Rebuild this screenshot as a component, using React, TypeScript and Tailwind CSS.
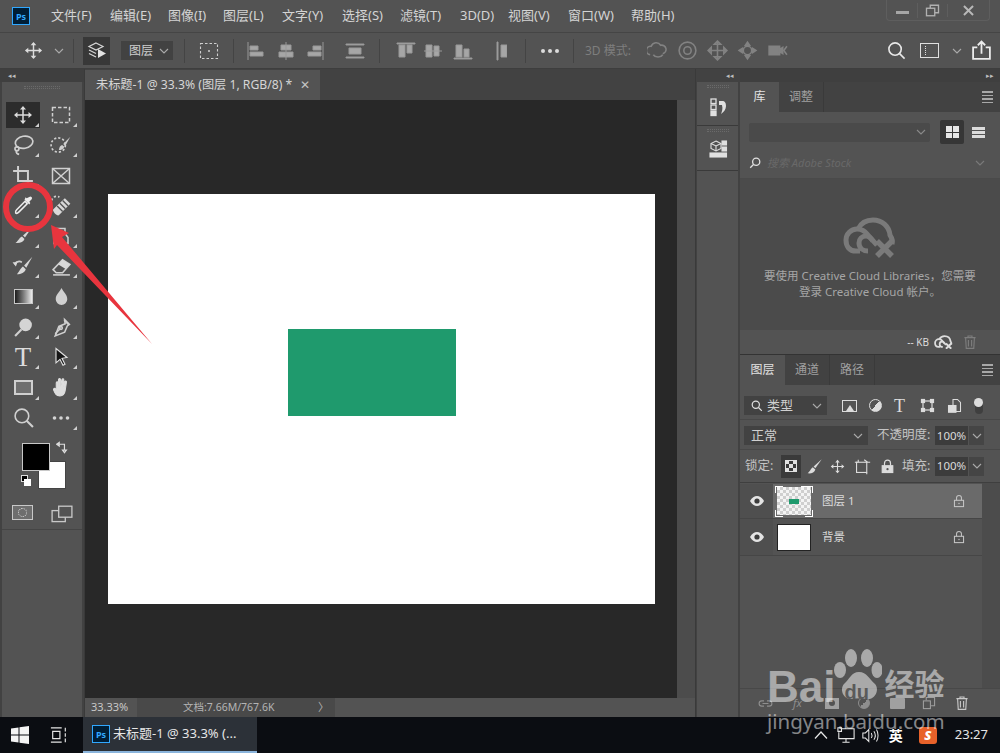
import React from 'react';

const FONT = '[font-family:"Noto_Sans","Noto_Sans_CJK_SC",sans-serif]';

const MENUS = [
    ['文件(F)', 'w-[42px] mr-[17px]'],
    ['编辑(E)', 'w-[42px] mr-[16px]'],
    ['图像(I)', 'w-[40px] mr-[15px]'],
    ['图层(L)', 'w-[43px] mr-[16px]'],
    ['文字(Y)', 'w-[43px] mr-[17px]'],
    ['选择(S)', 'w-[43px] mr-[15px]'],
    ['滤镜(T)', 'w-[43px] mr-[17px]'],
    ['3D(D)', 'w-[33px] mr-[15px]'],
    ['视图(V)', 'w-[44px] mr-[16px]'],
    ['窗口(W)', 'w-[48px] mr-[15px]'],
    ['帮助(H)', 'w-[46px]'],
];

type IconProps = { children: React.ReactNode; size?: number; color?: string; sw?: number };

const Ic = ({ children, size = 20, color = '#d0d0d0', sw = 1.5 }: IconProps) => (
    <svg width={size} height={size} viewBox="0 0 20 20" fill="none" stroke={color} strokeWidth={sw}>
        {children}
    </svg>
);

const MoveIcon = ({ size = 20, color = '#dcdcdc' }: { size?: number; color?: string }) => (
    <Ic size={size} color={color}>
        <path d="M10 2v16M2 10h16" />
        <path d="M10 1l3 3.500H7zM10 19l3-3.500H7zM1 10l3.500-3v6zM19 10l-3.500-3v6z" fill={color} stroke="none" />
    </Ic>
);

const Chevron = ({ color = '#aaaaaa' }: { color?: string }) => (
    <svg width="10" height="6" viewBox="0 0 10 6" fill="none" stroke={color} strokeWidth="1.100">
        <path d="M1 1l4 4 4-4" />
    </svg>
);

const Trash = ({ color = '#7d7d7d' }: { color?: string }) => (
    <Ic size={16} color={color} sw={1.400}>
        <path d="M3 4.500h14M7.500 4.500V2.500h5v2M4.500 4.500l.8 13.500h9.400l.8-13.500M8 7.500v8M12 7.500v8" />
    </Ic>
);

const Lock = ({ color = '#c4c4c4' }: { color?: string }) => (
    <Ic size={14} color={color}>
        <rect x="3.500" y="9" width="13" height="9" />
        <path d="M6.500 9V5.500a3.500 3.500 0 017 0V9" />
        <circle cx="10" cy="13.500" r="1" fill={color} stroke="none" />
    </Ic>
);

const Eye = () => (
    <svg width="14" height="10" viewBox="0 0 14 10">
        <path d="M0 5c2-3.300 4.300-5 7-5s5 1.700 7 5c-2 3.300-4.300 5-7 5S2 8.300 0 5z" fill="#e4e4e4" />
        <circle cx="7" cy="5" r="2.600" fill="#3c3c3c" />
    </svg>
);

const Grip = ({ w = 'w-[36px]' }: { w?: string }) => (
    <div className={`${w} h-[3px] mx-auto border-y border-dotted border-[#6a6a6a]`} />
);

const PanelMenu = () => (
    <div className="flex flex-col gap-[2px] w-[11px]">
        <div className="h-[1.500px] bg-[#a8a8a8]" />
        <div className="h-[1.500px] bg-[#a8a8a8]" />
        <div className="h-[1.500px] bg-[#a8a8a8]" />
        <div className="h-[1.500px] bg-[#a8a8a8]" />
    </div>
);

const Tab = ({ label, active, w }: { label: string; active?: boolean; w: string }) => (
    <div
        className={`${w} flex items-center justify-center text-[12px] ${
            active ? 'bg-[#535353] text-[#e2e2e2]' : 'text-[#a0a0a0] border-r border-[#3a3a3a]'
        }`}
    >
        {label}
    </div>
);

const Tool = ({ children, corner = true, active }: { children: React.ReactNode; corner?: boolean; active?: boolean }) => (
    <div className={`relative w-[34px] h-[26px] mb-[4.300px] flex items-center justify-center ${active ? 'bg-[#2c2c2c]' : ''}`}>
        {children}
        {corner && (
            <div className="absolute right-[1px] bottom-[1px] w-0 h-0 border-l-[4px] border-l-transparent border-b-[4px] border-b-[#cfcfcf]" />
        )}
    </div>
);

const TOOLS: { key: string; node: React.ReactNode; corner?: boolean; active?: boolean }[] = [
    { key: 'move', node: <MoveIcon />, active: true },
    {
        key: 'marquee',
        node: (
            <Ic>
                <rect x="1.500" y="2.500" width="17" height="15" strokeDasharray="3.500 2" />
            </Ic>
        ),
    },
    {
        key: 'lasso',
        node: (
            <Ic size={22}>
                <ellipse cx="11" cy="7.500" rx="8" ry="5.500" transform="rotate(-10 11 7.500)" />
                <circle cx="4.500" cy="13.500" r="1.800" />
                <path d="M4 15.500c-.5 1.500 .5 2.500 2.500 3" />
            </Ic>
        ),
    },
    {
        key: 'quick',
        node: (
            <Ic size={22}>
                <circle cx="7.500" cy="10" r="6.500" strokeDasharray="2 1.800" />
                <path d="M18.500 2.500l-6.500 6.500 1.800 1.800z" fill="#d0d0d0" stroke="none" />
                <path d="M11 10c-2 .5-2.500 2.500-3 4.500 2.500 0 4.500-.8 5-3z" fill="#d0d0d0" stroke="none" />
            </Ic>
        ),
    },
    {
        key: 'crop',
        node: (
            <Ic size={22}>
                <path d="M5.500 1v13.500H19M1 5.500h13.500V19" strokeWidth="1.800" />
            </Ic>
        ),
    },
    {
        key: 'frame',
        node: (
            <Ic>
                <rect x="1.500" y="2.500" width="17" height="15" />
                <path d="M1.500 2.500l17 15M18.500 2.500l-17 15" />
            </Ic>
        ),
        corner: false,
    },
    {
        key: 'eyedropper',
        node: (
            <Ic size={21} color="#ececec">
                <path d="M11.500 6L3.500 14c-1 1-1.500 2-1 3 .8.800 2 .3 3-.7l8-8z" />
                <path d="M11 4.500l4.500 4.500 1-1.500-1-1 2.300-2.500a1.600 1.600 0 00-2.300-2.200L13 3.200l-1-1z" fill="#ececec" stroke="none" />
            </Ic>
        ),
    },
    {
        key: 'heal',
        node: (
            <Ic size={22}>
                <path d="M1.500 5a4.500 4.500 0 017-3" strokeDasharray="2 1.800" />
                <path d="M3 13L13.500 3l5 5L8 18.500c-1.500 1-6.500-4-5-5.500z" fill="#d8d8d8" stroke="none" />
                <path d="M6.500 10l5 5M9 7.500l5 5M11.500 5l5 5" stroke="#535353" strokeWidth="1.200" />
            </Ic>
        ),
    },
    {
        key: 'brush',
        node: (
            <Ic>
                <path d="M18.500 2L10 9.500l2 2z" fill="#d8d8d8" stroke="none" />
                <path d="M9 10.500c-2.500 .8-2.800 3.500-6.500 6.500 4.500 .5 8-1 9-4z" fill="#d8d8d8" stroke="none" />
            </Ic>
        ),
    },
    {
        key: 'stamp',
        node: (
            <Ic>
                <path d="M6 2.500h8v5l3 4v6H3v-6l3-4z" />
            </Ic>
        ),
    },
    {
        key: 'history',
        node: (
            <Ic size={22}>
                <path d="M18.500 1.500L11 9.500l2 2z" fill="#d8d8d8" stroke="none" />
                <path d="M10 10.500c-2 1-2.500 3.500-5.500 7 4 0 7-1.500 8-4.500z" fill="#d8d8d8" stroke="none" />
                <path d="M2 8.500c2-2.500 5-3 7-2" />
                <path d="M0.500 6.500l3 4 1.500-4z" fill="#d8d8d8" stroke="none" />
            </Ic>
        ),
    },
    {
        key: 'eraser',
        node: (
            <Ic size={21}>
                <path d="M2 13l9-9.500 7 4.500-7 8H5z" />
                <path d="M11 3.500l7 4.500-4 4.500L7 8z" fill="#d8d8d8" stroke="none" />
                <path d="M2 18h16" />
            </Ic>
        ),
    },
    {
        key: 'gradient',
        node: <div className="w-[19px] h-[15px] border border-[#c8c8c8] bg-gradient-to-r from-[#1d1d1d] to-[#ededed]" />,
    },
    {
        key: 'blur',
        node: (
            <Ic size={21}>
                <path d="M10 2c2 4 5.500 6.500 5.500 10.500a5.500 5.500 0 01-11 0C4.500 8.500 8 6 10 2z" fill="#d0d0d0" stroke="none" />
            </Ic>
        ),
    },
    {
        key: 'dodge',
        node: (
            <Ic size={21}>
                <circle cx="12" cy="7.500" r="6" fill="#d4d4d4" stroke="none" />
                <path d="M8 12l-6 6" strokeWidth="2" />
            </Ic>
        ),
    },
    {
        key: 'pen',
        node: (
            <Ic size={21}>
                <path d="M13 2.500l4.500 4.500-2 1.500-2.500 6-9 3.500 3.500-9 6-2.500z" />
                <path d="M4 16l5-5M12.500 3l4.500 4.500" />
                <circle cx="9.500" cy="10.500" r="1.300" />
            </Ic>
        ),
    },
    {
        key: 'type',
        node: <span className='text-[27px] leading-none text-[#dcdcdc] [font-family:"Liberation_Serif",serif]'>T</span>,
    },
    {
        key: 'select',
        node: (
            <Ic color="#e4e4e4" sw={1.100}>
                <path d="M5 1.500l11 9-5 .8 3 6-2 1-3-6-4 3.500z" fill="#151515" />
            </Ic>
        ),
    },
    {
        key: 'shape',
        node: <div className="w-[19px] h-[15px] border-2 border-[#cfcfcf] bg-[#6f6f6f]" />,
    },
    {
        key: 'hand',
        node: (
            <Ic size={21} color="#dddddd" sw={1}>
                <path
                    d="M5 11V5.500c0-1.300 1.800-1.300 1.800 0V9l.4-6.500c0-1.300 1.900-1.300 1.900 0L9.400 9l1-6.500c.2-1.300 2-1 1.800.3L11.400 9.500l1.600-5c.4-1.200 2-.7 1.700.5L13.500 13c-.5 3-2 5-5 5-3.500 0-4.500-2-6-5.500-.6-1.500 1-2.200 1.800-1z"
                    fill="#dddddd"
                />
            </Ic>
        ),
    },
    {
        key: 'zoom',
        node: (
            <Ic size={21}>
                <circle cx="8.500" cy="8.500" r="6.500" />
                <path d="M13 13l6 6" strokeWidth="2" />
            </Ic>
        ),
        corner: false,
    },
    {
        key: 'more',
        node: (
            <Ic color="#d4d4d4">
                <circle cx="3.500" cy="10" r="1.800" fill="#d4d4d4" stroke="none" />
                <circle cx="10" cy="10" r="1.800" fill="#d4d4d4" stroke="none" />
                <circle cx="16.500" cy="10" r="1.800" fill="#d4d4d4" stroke="none" />
            </Ic>
        ),
    },
];

const AlignBars = ({ d }: { d: string }) => (
    <Ic color="#989898" sw={1}>
        <path d={d} fill="#a6a6a6" />
    </Ic>
);

const Dim3D = ({ children }: { children: React.ReactNode }) => (
    <div className="w-[24px] mr-[6px] flex items-center justify-center">
        <Ic size={21} color="#828282">
            {children}
        </Ic>
    </div>
);

const OptionsBar = () => (
    <div className="h-[37px] shrink-0 bg-[#535353] border-t border-[#454545] border-b border-b-[#3e3e3e] flex items-center">
        <div className="ml-[24px] w-[20px]">
            <MoveIcon size={19} />
        </div>
        <div className="ml-[10px] w-[10px]">
            <Chevron />
        </div>
        <div className="w-px h-[24px] bg-[#444444] ml-[9px]" />
        <div className="ml-[9px] w-[27px] h-[28px] bg-[#383838] flex items-center justify-center">
            <Ic color="#d8d8d8" sw={1.200}>
                <path d="M9 2l7 3.500-7 3.500-7-3.500zM2 9l7 3.500M2 12.500l7 3.500" />
                <path d="M11 8l8 4.500-8 4.500z" fill="#e4e4e4" stroke="none" />
            </Ic>
        </div>
        <div className="ml-[11px] w-[52px] h-[19px] bg-[#424242] flex items-center justify-between pl-[8px] pr-[4px] text-[12px] text-[#cfcfcf]">
            图层
            <Chevron />
        </div>
        <div className="w-px h-[24px] bg-[#444444] ml-[11px]" />
        <div className="ml-[14px] w-[20px]">
            <Ic color="#cfcfcf" sw={1.100}>
                <rect x="1.500" y="2.500" width="17" height="15" strokeDasharray="2.500 2" />
                <circle cx="10" cy="10" r="1" fill="#cfcfcf" stroke="none" />
            </Ic>
        </div>
        <div className="w-px h-[24px] bg-[#444444] ml-[14px] mr-[12px]" />
        <div className="w-[22px]"><AlignBars d="M2 1v18M4 5h8v4H4zM4 11h13v4H4z" /></div>
        <div className="w-[22px] ml-[8px]"><AlignBars d="M10 1v18M5 4h10v5H5zM3 11h14v5H3z" /></div>
        <div className="w-[22px] ml-[7px]"><AlignBars d="M18 1v18M8 5h8v4H8zM3 11h13v4H3z" /></div>
        <div className="w-[22px] ml-[18px]"><AlignBars d="M1 3h18v1H1zM1 16h18v1H1zM4 7h12v6H4z" /></div>
        <div className="w-px h-[24px] bg-[#444444] ml-[12px] mr-[16px]" />
        <div className="w-[22px]"><AlignBars d="M1 2h18v1H1zM3 4h6v12H3zM11 4h5v8h-5z" /></div>
        <div className="w-[22px] ml-[5px]"><AlignBars d="M1 10h18M3 4h6v12H3zM11 5h5v10h-5z" /></div>
        <div className="w-[22px] ml-[8px]"><AlignBars d="M1 17h18v1H1zM3 4h6v12H3zM11 8h5v8h-5z" /></div>
        <div className="w-[12px] ml-[20px] overflow-hidden"><AlignBars d="M2 1h1v18H2zM6 4h6v12H6z" /></div>
        <div className="w-px h-[24px] bg-[#444444] ml-[18px]" />
        <div className="w-[18px] ml-[14px]">
            <Ic color="#dcdcdc">
                <circle cx="3" cy="10" r="2" fill="#dcdcdc" stroke="none" />
                <circle cx="10" cy="10" r="2" fill="#dcdcdc" stroke="none" />
                <circle cx="17" cy="10" r="2" fill="#dcdcdc" stroke="none" />
            </Ic>
        </div>
        <div className="w-px h-[24px] bg-[#444444] ml-[15px]" />
        <div className="ml-[11px] w-[46px] text-[12px] text-[#7e7e7e] whitespace-nowrap">3D 模式:</div>
        <div className="ml-[14px] flex items-center">
            <Dim3D><path d="M3 14a4 4 0 011-8 5 5 0 019-1 4 4 0 012 8M6 14c2 3 7 3 9 0" /></Dim3D>
            <Dim3D><circle cx="10" cy="10" r="8" /><circle cx="10" cy="10" r="3.500" /></Dim3D>
            <Dim3D><path d="M10 1v18M1 10h18M10 1l3 3H7zM10 19l3-3H7zM1 10l3-3v6zM19 10l-3-3v6z" /></Dim3D>
            <Dim3D><path d="M10 2l2 3H8zM10 18l2-3H8zM2 10l3-2v4zM18 10l-3-2v4z" fill="#828282" /><circle cx="10" cy="10" r="4" /></Dim3D>
            <Dim3D><path d="M2 6h10v8H2zM12 9l3-2v6l-3-2z" fill="#828282" /><path d="M19 6l-3 4 3 4" /></Dim3D>
        </div>
        <div className="ml-auto flex items-center pr-[8px]">
            <Ic size={19} color="#e8e8e8" sw={1.700}>
                <circle cx="8.500" cy="8.500" r="6.500" />
                <path d="M13 13l5.500 5.500" />
            </Ic>
            <div className="ml-[14px] w-[19px] h-[15px] border-[1.500px] border-[#e0e0e0] flex items-center pl-[2px]">
                <div className="w-[3px] h-[9px] border-r border-dotted border-[#e0e0e0]" />
            </div>
            <div className="ml-[13px] w-[10px]"><Chevron /></div>
            <div className="ml-[9px]">
                <Ic size={21} color="#ececec" sw={1.700}>
                    <path d="M6 7H2v11h16V7h-4M10 13V2M6.500 5L10 1.500 13.500 5" />
                </Ic>
            </div>
        </div>
    </div>
);

const Toolbox = () => (
    <div className="w-[85px] shrink-0 flex flex-col bg-[#424242] border-r border-[#3a3a3a]">
        <div className="h-[13px] flex items-center pl-[8px] text-[7px] leading-none text-[#bdbdbd] bg-[#3f3f3f]">◂◂</div>
        <div className="flex-1 ml-[2px] mr-[2px] bg-[#535353] flex flex-col pt-[4px]">
            <Grip />
            <div className="mt-[13px] pl-[4px] grid grid-cols-[38px_38px]">
                {TOOLS.map((t) => (
                    <Tool key={t.key} corner={t.corner !== false} active={t.active}>
                        {t.node}
                    </Tool>
                ))}
            </div>
            <div className="h-[50px] mt-[8px] flex pl-[20px]">
                <div className="flex flex-col">
                    <div className="w-[28px] h-[28px] bg-black border border-[#c8c8c8] z-10" />
                    <div className="relative mt-[4px] ml-[-1px] w-[11px] h-[11px]">
                        <div className="w-[7px] h-[7px] bg-black border border-[#ddd]" />
                        <div className="ml-[3px] -mt-[3px] w-[7px] h-[7px] bg-white" />
                    </div>
                </div>
                <div className="ml-[-12px] mt-[18px] w-[28px] h-[28px] bg-white border border-[#444]" />
                <div className="ml-[-10px] mt-[-2px]">
                    <Ic size={13} color="#dddddd" sw={1.800}>
                        <path d="M3 5h10v10M1 5l4-3v6zM13 18l-3-4h6z" />
                    </Ic>
                </div>
            </div>
            <div className="mt-[11px] flex pl-[10px] items-center">
                <div className="w-[21px] h-[15px] border-[1.500px] border-[#c8c8c8] bg-[#6e6e6e] flex items-center justify-center">
                    <div className="w-[9px] h-[9px] rounded-full border border-dotted border-[#ddd]" />
                </div>
                <div className="relative ml-[18px] w-[22px] h-[16px]">
                    <Ic size={22} color="#c8c8c8" sw={1.200}>
                        <rect x="1" y="6" width="12" height="10" />
                        <rect x="7" y="2" width="12" height="10" fill="#535353" />
                    </Ic>
                </div>
            </div>
            <div className="mt-[9px] border-t border-[#454545]" />
        </div>
    </div>
);

const CanvasArea = () => (
    <div className="flex-1 min-w-0 flex flex-col">
        <div className="h-[31px] shrink-0 bg-[#424242] flex items-end">
            <div className="w-[235px] h-[30px] bg-[#535353] flex items-center pl-[11px] text-[12.200px] text-[#d6d6d6] whitespace-nowrap">
                未标题-1 @ 33.3% (图层 1, RGB/8) *
                <span className="ml-[8px] text-[#c4c4c4] text-[12px] leading-none">✕</span>
            </div>
        </div>
        <div className="flex-1 flex min-h-0">
            <div className="flex-1 bg-[#282828] pl-[23px] pt-[94px]">
                <div className="w-[547px] h-[410px] bg-white pl-[180px] pt-[135px]">
                    <div className="w-[168px] h-[87px] bg-[#1f9a6d]" />
                </div>
            </div>
            <div className="w-[18px] bg-[#4c4c4c]" />
        </div>
        <div className="h-[19px] shrink-0 bg-[#535353] flex items-center text-[11px] text-[#c8c8c8]">
            <div className="w-[52px] pl-[6px] whitespace-nowrap">33.33%</div>
            <div className="w-[198px] bg-[#494949] h-full flex items-center pl-[46px] pr-[6px] justify-between text-[10.500px] text-[#b4b4b4] whitespace-nowrap">
                文档:7.66M/767.6K
                <span className="text-[11px]">〉</span>
            </div>
        </div>
    </div>
);

const IconDock = () => (
    <div className="w-[45px] shrink-0 flex flex-col border-l border-[#3a3a3a] bg-[#424242]">
        <div className="h-[13px] flex items-center justify-end pr-[6px] text-[7px] leading-none text-[#bdbdbd]">◂◂</div>
        <div className="flex-1 bg-[#535353] mr-[2px] ml-[1px]">
            <div className="h-[44px] border-b border-[#3a3a3a] pt-[3px] flex flex-col items-center">
                <Grip w="w-[22px]" />
                <div className="mt-[9px]">
                    <Ic color="#e0e0e0" sw={1.300}>
                        <rect x="3" y="2" width="5" height="4.500" />
                        <rect x="3" y="8" width="5" height="4.500" />
                        <rect x="3" y="14" width="5" height="4.500" fill="#e0e0e0" />
                        <path d="M11 4h3c3 0 4 2 4 5s-2 6-5 8c1-3 2-5 1-9h-3z" fill="#e0e0e0" stroke="none" />
                    </Ic>
                </div>
            </div>
            <div className="h-[45px] border-b border-[#3a3a3a] pt-[3px] flex flex-col items-center">
                <Grip w="w-[22px]" />
                <div className="mt-[7px]">
                    <Ic color="#e0e0e0" sw={1.100}>
                        <path d="M8 2l5 2.500v5L8 12 3 9.500v-5z" />
                        <path d="M3 4.500L8 7l5-2.500M8 7v5" />
                        <rect x="14" y="2" width="4.500" height="4" fill="#e0e0e0" />
                        <rect x="14" y="8" width="4.500" height="4" fill="#e0e0e0" />
                        <rect x="2" y="14" width="16.500" height="4" fill="#e0e0e0" />
                    </Ic>
                </div>
            </div>
        </div>
    </div>
);

const CloudOff = ({ size = 54, color = '#7a7a7a' }: { size?: number; color?: string }) => (
    <svg width={size} height={size * 0.78} viewBox="0 0 54 42" fill="none" stroke={color} strokeWidth="5">
        <path d="M17 34H13C6 34 3 29 3 23s5-11 11-11c4 0 8 2 11 6l9 10" />
        <path d="M15 12C18 6 24 3 30 3c9 0 16 6 17 15 2 3 3 6 2 9" />
        <path d="M25 34c-5 0-9-3-9-8 0-4 3-7 7-7 3 0 5 2 7 5" />
        <path d="M34 24l15 15M49 24L34 39" strokeWidth="5.500" />
    </svg>
);

const LibraryPanel = () => (
    <div className="h-[272px] shrink-0 flex flex-col">
        <div className="h-[30px] shrink-0 bg-[#424242] flex pr-[7px]">
            <Tab label="库" active w="w-[39px]" />
            <Tab label="调整" w="w-[45px]" />
            <div className="ml-auto self-center"><PanelMenu /></div>
        </div>
        <div className="h-[67px] shrink-0 bg-[#535353] border-b border-[#4a4a4a] px-[9px] pt-[8px]">
            <div className="flex items-center">
                <div className="w-[181px] h-[19px] bg-[#4a4a4a] rounded-[2px] flex items-center justify-end pr-[4px]">
                    <Chevron color="#8a8a8a" />
                </div>
                <div className="ml-[10px] w-[24px] h-[24px] bg-[#363636] rounded-[2px] flex items-center justify-center">
                    <div className="grid grid-cols-2 gap-[1px] w-[13px] h-[12px]">
                        <div className="bg-[#e6e6e6]" />
                        <div className="bg-[#e6e6e6]" />
                        <div className="bg-[#e6e6e6]" />
                        <div className="bg-[#e6e6e6]" />
                    </div>
                </div>
                <div className="ml-[8px] w-[13px] flex flex-col gap-[1px]">
                    <div className="h-[3px] bg-[#dcdcdc]" />
                    <div className="h-[3px] bg-[#dcdcdc]" />
                    <div className="h-[3px] bg-[#dcdcdc]" />
                </div>
            </div>
            <div className="mt-[11px] flex items-center">
                <Ic size={12} color="#e0e0e0" sw={2.200}>
                    <circle cx="12" cy="8" r="6" />
                    <path d="M7.500 12.500L2 18" />
                </Ic>
                <span className="ml-[6px] text-[11px] italic text-[#696969]">搜索 Adobe Stock</span>
                <div className="ml-auto mr-[6px]"><Chevron color="#7a7a7a" /></div>
            </div>
        </div>
        <div className="flex-1 bg-[#4b4b4b] flex flex-col items-center pt-[38px] text-[11.500px] leading-[16px] text-[#a6a6a6]">
            <CloudOff />
            <div className="mt-[9px] whitespace-nowrap">要使用 Creative Cloud Libraries，您需要</div>
            <div className="whitespace-nowrap">登录 Creative Cloud 帐户。</div>
        </div>
        <div className="h-[24px] shrink-0 bg-[#535353] flex items-center justify-end pr-[22px] text-[10px] text-[#dddddd]">
            -- KB
            <div className="ml-[5px] mr-[9px]"><CloudOff size={19} color="#dddddd" /></div>
            <Trash />
        </div>
    </div>
);

const Select = ({ children, w }: { children: React.ReactNode; w: string }) => (
    <div className={`${w} h-[19px] bg-[#424242] flex items-center justify-between pr-[5px] text-[13px] text-[#d0d0d0]`}>
        {children}
        <Chevron />
    </div>
);

const Percent = () => (
    <div className="flex h-[19px] ml-[4px]">
        <div className="w-[33px] bg-[#3c3c3c] flex items-center justify-center text-[11.500px] text-[#dadada]">100%</div>
        <div className="w-[15px] ml-px bg-[#454545] flex items-center justify-center"><Chevron /></div>
    </div>
);

const Checker = () => (
    <div className="w-[34px] h-[28px] bg-[length:6px_6px] bg-[#f4f4f4] bg-[linear-gradient(45deg,#cfcfcf_25%,transparent_25%,transparent_75%,#cfcfcf_75%),linear-gradient(45deg,#cfcfcf_25%,transparent_25%,transparent_75%,#cfcfcf_75%)] bg-[position:0_0,3px_3px] flex items-center justify-center">
        <div className="w-[10px] h-[5px] bg-[#1f9a6d]" />
    </div>
);

const Corners = () => (
    <>
        <div className="absolute left-0 top-0 w-[8px] h-[7px] border-l border-t border-white" />
        <div className="absolute right-0 top-0 w-[12px] h-[7px] border-r border-t border-white" />
        <div className="absolute left-0 bottom-0 w-[8px] h-[7px] border-l border-b border-white" />
        <div className="absolute right-0 bottom-0 w-[8px] h-[7px] border-r border-b border-white" />
    </>
);

const LayerRow = ({ name, active, bg }: { name: string; active?: boolean; bg?: boolean }) => (
    <div className={`${active ? 'h-[35px]' : 'h-[37px]'} flex items-center border-b border-[#464646]`}>
        <div className="w-[33px] h-full flex items-center justify-center bg-[#4f4f4f]"><Eye /></div>
        <div className={`flex-1 min-w-0 h-full flex items-center ${active ? 'bg-[#6a6a6a]' : 'bg-[#535353]'}`}>
            <div className="relative ml-[2px] w-[38px] h-[31px] flex items-center justify-center">
                {bg ? <div className="w-[34px] h-[27px] bg-white border border-[#222]" /> : <Checker />}
                {active && <Corners />}
            </div>
            <span className="ml-[9px] text-[11.500px] text-[#dadada]">{name}</span>
            <div className="ml-auto mr-[16px]"><Lock /></div>
        </div>
    </div>
);

const LayersPanel = () => (
    <div className="flex-1 min-h-0 flex flex-col border-t border-[#333333]">
        <div className="h-[30px] shrink-0 bg-[#424242] flex pr-[7px]">
            <Tab label="图层" active w="w-[45px]" />
            <Tab label="通道" w="w-[45px]" />
            <Tab label="路径" w="w-[45px]" />
            <div className="ml-auto self-center"><PanelMenu /></div>
        </div>
        <div className="flex-1 min-h-0 bg-[#535353] flex flex-col">
            <div className="h-[35px] shrink-0 flex items-center pl-[4px] pt-[7px] border-b border-[#484848]">
                <Select w="w-[83px]">
                    <span className="flex items-center gap-[4px] pl-[7px]">
                        <Ic size={12} color="#e0e0e0" sw={2}>
                            <circle cx="8" cy="8" r="6" />
                            <path d="M12.500 12.500L18 18" />
                        </Ic>
                        类型
                    </span>
                </Select>
                <div className="ml-[15px] flex items-center">
                    <div className="w-[15px] h-[12px] border-[1.500px] border-[#dcdcdc] flex items-end justify-center">
                        <div className="w-0 h-0 border-x-[4px] border-x-transparent border-b-[6px] border-b-[#dcdcdc]" />
                    </div>
                    <div className="ml-[12px] w-[13px] h-[13px] rounded-full border-[1.500px] border-[#dcdcdc] bg-[linear-gradient(135deg,transparent_50%,#dcdcdc_50%)]" />
                    <span className='ml-[12px] w-[14px] text-[18px] leading-none text-[#dcdcdc] [font-family:"Liberation_Serif",serif]'>T</span>
                    <div className="ml-[12px]">
                        <Ic size={15} color="#dcdcdc" sw={1.600}>
                            <rect x="4" y="4" width="12" height="12" />
                            <rect x="2" y="2" width="4" height="4" fill="#dcdcdc" />
                            <rect x="14" y="2" width="4" height="4" fill="#dcdcdc" />
                            <rect x="2" y="14" width="4" height="4" fill="#dcdcdc" />
                            <rect x="14" y="14" width="4" height="4" fill="#dcdcdc" />
                        </Ic>
                    </div>
                    <div className="ml-[12px]">
                        <Ic size={15} color="#dcdcdc" sw={1.400}>
                            <path d="M8 10V2h6l4 4v12h-6" />
                            <rect x="2" y="10" width="10" height="9" fill="#dcdcdc" />
                        </Ic>
                    </div>
                    <div className="ml-[12px] flex flex-col items-center">
                        <div className="w-[9px] h-[9px] rounded-full bg-[#dddddd] z-10" />
                        <div className="w-[8px] h-[10px] -mt-[3px] rounded-b-full bg-[#3f3f3f]" />
                    </div>
                </div>
            </div>
            <div className="h-[30px] shrink-0 flex items-center pl-[4px] pt-[2px] border-b border-[#484848]">
                <Select w="w-[124px]"><span className="pl-[7px]">正常</span></Select>
                <span className="ml-[9px] w-[54px] text-[12.500px] text-[#c4c4c4] whitespace-nowrap">不透明度:</span>
                <Percent />
            </div>
            <div className="h-[33px] shrink-0 flex items-center pl-[5px] border-b border-[#3f3f3f]">
                <span className="w-[30px] text-[12.500px] text-[#c4c4c4] whitespace-nowrap">锁定:</span>
                <div className="ml-[6px] w-[20px] h-[23px] bg-[#3a3a3a] flex items-center justify-center">
                    <div className="w-[12px] h-[12px] border border-[#e0e0e0] grid grid-cols-3 grid-rows-3">
                        <div className="bg-[#e0e0e0]" /><div /><div className="bg-[#e0e0e0]" />
                        <div /><div className="bg-[#e0e0e0]" /><div />
                        <div className="bg-[#e0e0e0]" /><div /><div className="bg-[#e0e0e0]" />
                    </div>
                </div>
                <div className="ml-[5px]">
                    <Ic size={17} color="#dcdcdc">
                        <path d="M18.500 1.500L9 10l2 2z" fill="#dcdcdc" stroke="none" />
                        <path d="M8 11c-2 1-2.500 4-6 7 4.500 .5 8-1 9-4.500z" fill="#dcdcdc" stroke="none" />
                    </Ic>
                </div>
                <div className="ml-[7px]"><MoveIcon size={15} /></div>
                <div className="ml-[9px]">
                    <Ic size={17} color="#dcdcdc" sw={1.300}>
                        <rect x="3" y="5" width="12" height="12" />
                        <path d="M1 5h3M15 5h4M5 2v3M15 17v2M12 2l4 3" />
                    </Ic>
                </div>
                <div className="ml-[9px]">
                    <Ic size={15} color="#dcdcdc" sw={1.600}>
                        <rect x="3" y="9" width="14" height="9" fill="#dcdcdc" />
                        <path d="M6 9V5.500a4 4 0 018 0V9" />
                        <circle cx="10" cy="13.500" r="1.500" fill="#535353" stroke="none" />
                    </Ic>
                </div>
                <span className="ml-[7px] w-[29px] text-[12.500px] text-[#c4c4c4] whitespace-nowrap">填充:</span>
                <Percent />
            </div>
            <div className="flex-1 min-h-0 flex">
                <div className="flex-1 min-w-0 pt-[1px]">
                    <LayerRow name="图层 1" active />
                    <LayerRow name="背景" bg />
                </div>
                <div className="w-[18px] bg-[#4c4c4c]" />
            </div>
            <div className="h-[29px] shrink-0 border-t border-[#484848] flex items-center pl-[18px]">
                <Ic size={15} color="#8e8e8e">
                    <path d="M8 6.500H5a3.500 3.500 0 000 7h3M12 6.500h3a3.500 3.500 0 010 7h-3M6 10h8" />
                </Ic>
                <span className="ml-[20px] w-[13px] text-[11px] italic text-[#8e8e8e]">fx</span>
                <div className="ml-[19px] w-[14px] h-[11px] bg-[#a0a0a0] flex items-center justify-center">
                    <div className="w-[6px] h-[6px] rounded-full bg-[#535353]" />
                </div>
                <div className="ml-[19px] w-[12px] h-[12px] rounded-full border border-[#8e8e8e] bg-[linear-gradient(135deg,transparent_50%,#8e8e8e_50%)]" />
                <div className="ml-[20px] w-[15px] h-[11px] bg-[#a0a0a0] rounded-[1px]" />
                <div className="ml-[17px]">
                    <Ic size={14} color="#a0a0a0" sw={1.500}>
                        <path d="M6 6V2h12v12h-5" />
                        <rect x="2" y="7" width="10" height="11" />
                    </Ic>
                </div>
                <div className="ml-[18px]"><Trash color="#c8c8c8" /></div>
            </div>
        </div>
    </div>
);

const Taskbar = () => (
    <div className="h-[36px] shrink-0 bg-[#0b0d12] flex items-center text-[#e6e6e6]">
        <div className="ml-[11px] w-[18px]">
            <svg width="18" height="18" viewBox="0 0 18 18" fill="#f4f4f4">
                <path d="M0 2.500L7.500 1.400v7.100H0zM8.500 1.300L18 0v8.500H8.500zM0 9.500h7.500v7.100L0 15.500zM8.500 9.500H18V18l-9.500-1.300z" />
            </svg>
        </div>
        <div className="ml-[21px] w-[18px]">
            <Ic size={18} color="#e6e6e6" sw={1.300}>
                <path d="M1 2h12M1 18h12M3 6h8v8H3zM17 2v4M17 8v4M17 14v4" />
            </Ic>
        </div>
        <div className="ml-[15px] w-[174px] h-full bg-[#2c3138] border-b-2 border-[#8ab4dc] flex items-center pl-[9px] text-[13px] whitespace-nowrap">
            <div className="w-[18px] h-[18px] bg-[#001e36] border border-[#31a8ff] flex items-center justify-center text-[9px] font-bold text-[#31a8ff] leading-none">Ps</div>
            <span className="ml-[3px]">未标题-1 @ 33.3% (...</span>
        </div>
        <div className="ml-auto flex items-center pr-[12px]">
            <svg width="14" height="8" viewBox="0 0 14 8" fill="none" stroke="#e6e6e6" strokeWidth="1.200">
                <path d="M1 7.500L7 1l6 6.500" />
            </svg>
            <div className="ml-[9px]">
                <Ic size={18} color="#e6e6e6" sw={1.200}>
                    <path d="M4 3h15v11H2V7M10 14v4M6 18h8M1 2h4v4H1z" />
                </Ic>
            </div>
            <div className="ml-[7px]">
                <Ic size={17} color="#e6e6e6" sw={1.200}>
                    <path d="M1 7h3l4-4v14l-4-4H1zM11 7c1 2 1 4 0 6M14 5c2 3 2 7 0 10M17 3c2.500 4 2.500 10 0 14" />
                </Ic>
            </div>
            <span className="ml-[10px] w-[16px] text-[14px] font-bold text-white">英</span>
            <div className="ml-[14px] w-[18px] h-[17px] rounded-[3px] bg-[#e8622a] flex items-center justify-center text-[13px] font-black italic text-white leading-none">S</div>
            <span className="ml-[18px] text-[13px] text-[#e6e6e6]">23:27</span>
        </div>
    </div>
);

export default function App() {
    return (
        <div className={`relative w-[1000px] h-[753px] overflow-hidden bg-[#535353] flex flex-col ${FONT}`}>
            {/* Menu bar */}
            <div className="h-[32px] shrink-0 flex items-center bg-[#535353]">
                <div className="ml-[12px] w-[18px] h-[18px] bg-[#001e36] border border-[#31a8ff] flex items-center justify-center text-[9px] font-bold text-[#31a8ff] leading-none">Ps</div>
                <div className="ml-[21px] flex text-[13px] text-[#d4d4d4] whitespace-nowrap">
                    {MENUS.map(([label, cls]) => (
                        <div key={label} className={cls}>{label}</div>
                    ))}
                </div>
                <div className="ml-auto mr-[10px] mb-[11px] w-[104px] h-[21px] border border-t-0 border-[#5e5e5e] rounded-b-[4px] flex items-center">
                    <div className="w-[30px] flex justify-center pt-[4px]"><div className="w-[13px] h-[3px] bg-[#a6a6a6]" /></div>
                    <div className="w-[30px] flex justify-center border-l border-[#5e5e5e]">
                        <Ic size={15} color="#b0b0b0" sw={1.800}>
                            <rect x="2" y="7" width="11" height="10" />
                            <path d="M7 7V3h11v10h-5" />
                        </Ic>
                    </div>
                    <div className="flex-1 flex justify-center border-l border-[#5e5e5e]">
                        <Ic size={13} color="#b8b8b8" sw={3}>
                            <path d="M3 3l14 14M17 3L3 17" />
                        </Ic>
                    </div>
                </div>
            </div>
            <OptionsBar />

            <div className="flex-1 min-h-0 flex">
                <Toolbox />
                <CanvasArea />
                <IconDock />
                <div className="w-[260px] shrink-0 flex flex-col bg-[#424242]">
                    <div className="h-[13px] shrink-0 flex items-center justify-end pr-[6px] text-[7px] leading-none text-[#bdbdbd] bg-[#3f3f3f]">▸▸</div>
                    <LibraryPanel />
                    <LayersPanel />
                </div>
            </div>

            <Taskbar />

            {/* Red annotation over the toolbox */}
            <svg className="absolute left-0 top-0 pointer-events-none" width="170" height="360" viewBox="0 0 170 360">
                <circle cx="28" cy="207" r="22" fill="none" stroke="#e8353e" strokeWidth="6" />
                <path d="M51 225l18 8-7 4 90 107-95-99-3 4z" fill="#e8353e" />
            </svg>

            {/* Baidu watermark */}
            <div className="absolute left-[767px] top-[647px] w-[185px] h-[90px] pointer-events-none text-white/50">
                <div className="flex items-start">
                    <span className='mt-[18px] text-[44px] leading-[44px] font-bold [font-family:"Liberation_Sans",sans-serif]'>Bai</span>
                    <div className="relative w-[50px] h-[62px] ml-[-3px]">
                        <svg width="50" height="62" viewBox="0 0 50 62" fill="currentColor">
                            <ellipse cx="19" cy="11" rx="6" ry="9" />
                            <ellipse cx="35" cy="11" rx="6" ry="9" />
                            <ellipse cx="8" cy="23" rx="6" ry="8" />
                            <ellipse cx="45" cy="23" rx="5.500" ry="8" />
                            <path d="M27 25c8 0 10 7 16 12 5 6 0 16-8 15-5-1-10-1-15 0-8 1-13-9-8-15 6-5 7-12 15-12z" />
                        </svg>
                        <span className='absolute left-[12px] top-[35px] text-[20px] leading-none font-bold text-[#5a5a5a] [font-family:"Liberation_Sans",sans-serif]'>du</span>
                    </div>
                    <span className="ml-[2px] mt-[19px] text-[30px] leading-[36px] font-bold whitespace-nowrap">经验</span>
                </div>
                <div className='-mt-[1px] text-[20.500px] leading-[26px] whitespace-nowrap [font-family:"Noto_Sans",sans-serif]'>jingyan.baidu.com</div>
            </div>
        </div>
    );
}
